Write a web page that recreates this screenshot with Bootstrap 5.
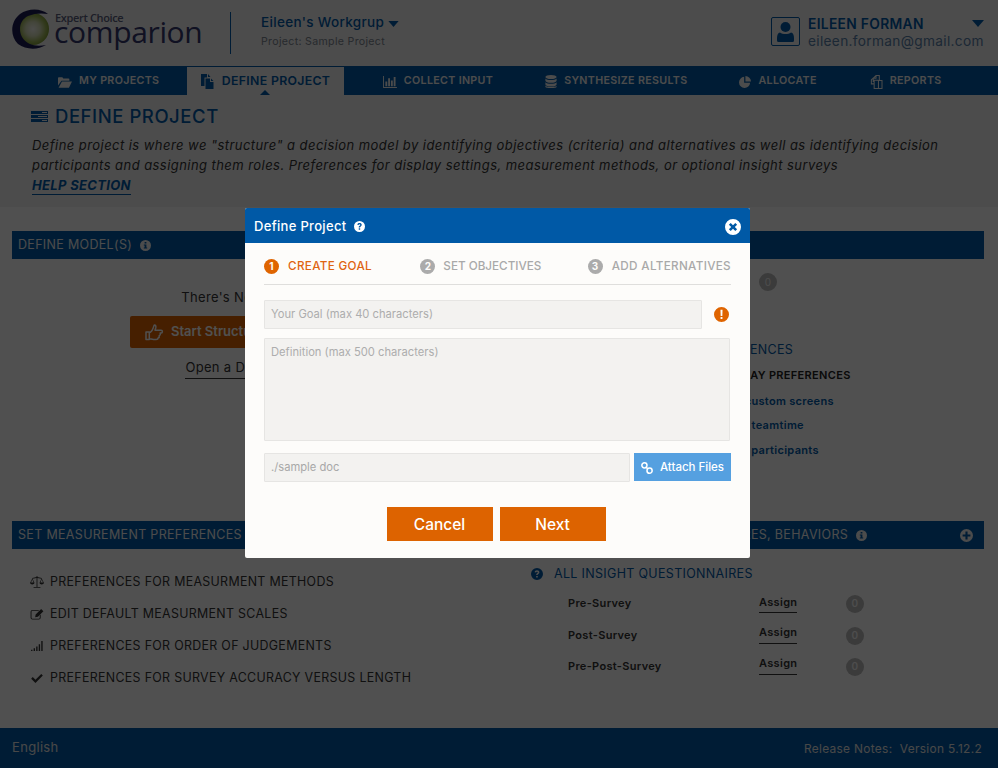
<!doctype html>
<html lang="en">
<head>
  <meta charset="utf-8">
  <meta name="viewport" content="width=device-width, initial-scale=1">
  <title>Define Project</title>
  <link href="https://cdn.jsdelivr.net/npm/bootstrap@5.3.3/dist/css/bootstrap.min.css" rel="stylesheet">
  <style>
    body {
      font-family: Inter, "Liberation Sans", sans-serif;
      background-color: #fff;
      color: #333;
      letter-spacing: .02em;
    }

    .ico { fill: currentColor; flex: none; }

    .top-area { background-color: #f2f2f2; }

    .app-header { height: 66px; padding: 0 14px 3px 12px; }
    .logo-wrap { width: 218px; height: 63px; }
    .logo-mark { margin-top: 9px; }
    .logo-type { margin: 13px 0 0 3px; }
    .logo-small { font: 600 11px/10px "Open Sans", sans-serif; color: #5b5f7d; letter-spacing: -.35px; }
    .logo-big { font: 30px/18px "Open Sans", sans-serif; color: #33366e; letter-spacing: -.35px; margin-left: -1px; }
    .head-divider { width: 1px; height: 42px; background: #005aa8; margin-right: 30px; margin-top: 3px; }
    .group-name { font-size: 13.5px; font-weight: 500; color: #005aa8; line-height: 18px; }
    .group-project { font-size: 10.6px; color: #7d8590; line-height: 18px; margin-top: 2px; }
    .avatar-box { width: 29px; height: 29px; border: 1px solid #005aa8; border-radius: 2px; color: #005aa8; }
    .user-name { font-size: 13.8px; font-weight: 600; color: #005aa8; line-height: 18px; }
    .user-mail { font-size: 13.7px; color: #5a7fa8; line-height: 16px; }

    .main-nav { height: 29px; background: #005aa8; padding-left: 58px; }
    .nav-entry { font-size: 10.7px; font-weight: 600; color: #f2f2f2; gap: 7px; white-space: nowrap; padding-top: 2px; }
    .nav-entry.is-active { background: #f2f2f2; color: #005aa8; font-size: 12.3px; height: 28px; margin-top: 1px; padding: 1px 13.5px 0; gap: 8px; position: relative; }
    .nav-entry.is-active::after {
      content: "";
      position: absolute;
      left: 73px;
      bottom: 0;
      border: 5px solid transparent;
      border-top: 0;
      border-bottom-color: #005aa8;
    }

    .intro { height: 112px; padding: 11px 32px 0 31px; }
    .intro-title { font-size: 18.5px; font-weight: 500; color: #005aa8; line-height: 20px; letter-spacing: .03em; gap: 7px; }
    .intro-text { font-size: 13px; font-style: italic; line-height: 20px; color: #333; letter-spacing: .034em; margin: 9px 0 0 1px; }
    .help-link { display: block; width: max-content; font-size: 13px; font-weight: 700; font-style: italic; line-height: 18px; color: #005aa8; border-bottom: 1px solid #005aa8; text-decoration: none; margin: 1px 0 0 1px; }

    .panels { display: grid; grid-template-columns: 1fr 1fr; column-gap: 16px; padding: 0 14px 0 12px; }
    .panel-head { height: 28px; background: #005aa8; color: #f2f2f2; font-size: 12.5px; padding: 1px 11px 0 6px; gap: 8px; white-space: nowrap; overflow: hidden; }
    .panel-top { height: 290px; margin-top: 24px; }
    .start-btn { height: 32px; width: 242px; margin-top: 10px; background: #e06400; color: #fff; font-size: 13px; font-weight: 600; border-radius: 2px; gap: 7px; border: 0; padding-left: 15px; }
    .plain-link { color: #333; font-size: 13px; text-decoration: none; border-bottom: 1px solid #333; margin-top: 10px; }
    .zero-dot { width: 18px; height: 18px; background: #bcbcbc; color: #f4f4f4; font-size: 10px; }

    .pref-list { padding-top: 17px; }
    .measure-row { height: 32px; font-size: 12.4px; color: #333; gap: 6px; padding-left: 18px; }
    .measure-row .ico { width: 14px; }
    .survey-title { font-size: 12.5px; color: #005aa8; gap: 11px; padding: 16px 0 0 25px; line-height: 18px; }
    .survey-row { height: 31px; font-size: 11px; font-weight: 600; color: #333; padding-left: 62px; }
    .survey-row.is-first { height: 33px; margin-top: 4px; }
    .survey-name { width: 191px; }
    .survey-assign { width: 38px; text-align: center; border-bottom: 1px solid #333; padding-bottom: 2px; margin-right: 49px; }
    .survey-assign.is-raised { margin-bottom: 3px; }
    .pref-label { font-size: 11px; line-height: 18px; font-weight: 600; color: #005aa8; }

    .app-footer { height: 40px; background: #005aa8; color: #e4e4e4; font-size: 13px; padding: 0 16px 0 12px; margin-top: auto; }
    .release-text { font-size: 11.9px; padding-top: 1px; }

    .modal-backdrop { --bs-backdrop-opacity: .685; }
    .goal-dialog { max-width: 505px; margin: 208px 0 0 245px; }
    .goal-content { height: 350px; background: #fdfcfa; border: 0; border-radius: 2px; overflow: hidden; }
    .goal-head { height: 35px; background: #0059a6; color: #fff; font-size: 13px; font-weight: 500; padding: 2px 9px 0; border: 0; border-radius: 0; }
    .goal-body { padding: 15px 20px 0 19px; font-size: 11px; }
    .step-line { height: 27px; padding-bottom: 8px; margin-right: -1px; border-bottom: 1px solid #dfdedc; }
    .step-item { font-size: 11.7px; font-weight: 500; color: #a9a9a9; gap: 9px; white-space: nowrap; }
    .step-item.is-current { color: #df6412; }
    .step-item.is-mid { margin-left: 2px; gap: 8px; letter-spacing: 0; }
    .step-num { width: 15px; height: 15px; background: #ababab; color: #fdfcfa; font-size: 10px; font-weight: 700; }
    .is-current .step-num { background: #df6400; }
    .goal-field {
      background: #f3f2f0;
      border: 1px solid #e6e5e3;
      border-radius: 1px;
      font-size: 11.2px;
      color: #a8a8a8;
      padding: 0 6px 2px;
      height: 29px;
    }
    .goal-field::placeholder { color: #adadad; }
    .goal-field:disabled { background: #f3f2f0; }
    textarea.goal-field { height: 103px; padding: 5px 6px; resize: none; }
    .attach-btn { width: 97px; height: 28px; margin-right: -1px; background: #55a0e0; color: #fff; font-size: 11.5px; font-weight: 500; border: 0; border-radius: 0; gap: 7px; padding: 1px 0 0; white-space: nowrap; }
    .act-btn { width: 106px; height: 34px; background: #dd6300; color: #fff; font-size: 15.5px; font-weight: 500; border: 0; border-radius: 0; padding: 1px 0 0; }
    .act-btn:hover { background: #c85900; color: #fff; }
  </style>
</head>

<body>
  <svg width="0" height="0" class="position-absolute">
    <defs>
      <radialGradient id="logo-core">
        <stop offset="0" stop-color="#f4f4ee"/>
        <stop offset=".45" stop-color="#d5dcb8"/>
        <stop offset=".8" stop-color="#9fb65a"/>
        <stop offset="1" stop-color="#84a03a"/>
      </radialGradient>
    </defs>
    <symbol id="i-question" viewBox="0 0 16 16"><path fill-rule="evenodd" d="M8 0a8 8 0 1 1 0 16A8 8 0 0 1 8 0zM8 3C6.100 3 5 4 4.800 5.600l2 .3C7 5.200 7.300 4.900 8 4.900s1.100.3 1.100.8c0 .5-.4.8-1 1.200-.8.5-1.200 1.100-1.200 2v.5h2v-.3c0-.5.3-.8.9-1.200.9-.6 1.400-1.300 1.400-2.300C11.200 4 9.900 3 8 3zM6.900 10.600v2.100h2.100v-2.100z"/></symbol>
    <symbol id="i-info" viewBox="0 0 16 16"><path fill-rule="evenodd" d="M8 0a8 8 0 1 1 0 16A8 8 0 0 1 8 0zM6.700 2.800v2.300h2.600V2.800zM5.500 6.500v1.500h1.200v3H5.500v1.500h5V11H9.300V6.500z"/></symbol>
    <symbol id="i-plus" viewBox="0 0 16 16"><path fill-rule="evenodd" d="M8 0a8 8 0 1 1 0 16A8 8 0 0 1 8 0zM6.700 3.200v3.500H3.200v2.600h3.500v3.500h2.600V9.300h3.500V6.700H9.300V3.200z"/></symbol>
    <symbol id="i-close" viewBox="0 0 16 16"><path fill-rule="evenodd" d="M8 0a8 8 0 1 1 0 16A8 8 0 0 1 8 0zM5.700 3.900 3.900 5.700 6.200 8l-2.300 2.300 1.800 1.800L8 9.800l2.300 2.300 1.800-1.800L9.800 8l2.300-2.300-1.800-1.800L8 6.200z"/></symbol>
    <symbol id="i-alert" viewBox="0 0 16 16"><path fill-rule="evenodd" d="M8 0a8 8 0 1 1 0 16A8 8 0 0 1 8 0zM6.900 3l.2 6.500h1.800L9.100 3zM7 10.600v2.100h2v-2.100z"/></symbol>
    <symbol id="i-caret" viewBox="0 0 12 7"><path d="M0 0h12L6 7z"/></symbol>
    <symbol id="i-folder" viewBox="0 0 16 13"><path d="M0 2a1 1 0 0 1 1-1h4l1 1.500h6a1 1 0 0 1 1 1V5H4L0 10.500zM4.500 6H16l-3.500 7H.7z"/></symbol>
    <symbol id="i-files" viewBox="0 0 13 15"><path fill-rule="evenodd" d="M0 0h6v3.500H3.500V12H0zM7 0l2.500 3H7zM4.500 4.500H9V8h3.500v7h-8zM10 4.500 12.500 7H10z"/></symbol>
    <symbol id="i-bars" viewBox="0 0 15 13"><path d="M0 0h1v12h14v1H0zM2.500 6h2v5h-2zM5.500 2.500h2V11h-2zM8.500 5h2v6h-2zM11.500 1h2v10h-2z"/></symbol>
    <symbol id="i-db" viewBox="0 0 12 15"><ellipse cx="6" cy="2.200" rx="6" ry="2.200"/><path d="M0 3.700c1 1.200 3 1.700 6 1.700s5-.5 6-1.700v2.500c0 1.200-2.700 2.200-6 2.200S0 7.400 0 6.200zM0 7.700C1 8.900 3 9.400 6 9.400s5-.5 6-1.700v2.500c0 1.200-2.700 2.200-6 2.200s-6-1-6-2.200zM0 11.200c1 1.200 3 1.700 6 1.700s5-.5 6-1.200v.8c0 1.200-2.700 1.500-6 1.500s-6-.3-6-1.500z"/></symbol>
    <symbol id="i-pie" viewBox="0 0 14 14"><path d="M6 1v7h7A6.500 6.500 0 1 1 6 1zM7.500 0A6.500 6.500 0 0 1 14 6.500H7.500z"/></symbol>
    <symbol id="i-copies" viewBox="0 0 13 15"><path fill="none" stroke="currentColor" stroke-width="1.100" d="M3 7.500V3.500L6 .6h3.500v5M6 .6v3H3M4 5.600h4l.6.6V14.400H4zM8.600 6h3.800v8.400H8.600M4.400 9.500 1 9.500V5l2-1.500"/></symbol>
    <symbol id="i-list" viewBox="0 0 17 11"><path fill-rule="evenodd" d="M0 0h17v3H0zM11 1v1h5V1zM0 4h17v3H0zM7 5v1h9V5zM0 8h17v3H0zM11 9v1h5V9z"/></symbol>
    <symbol id="i-user" viewBox="0 0 17 20"><circle cx="8.500" cy="5" r="5"/><path d="M3 10.500c1.300 1 3.500 1.500 5.500 1.500s4.200-.5 5.500-1.500c2 .4 3 2.500 3 5.500v2.500a1.500 1.500 0 0 1-1.500 1.500h-14A1.500 1.500 0 0 1 0 18.500V16c0-3 1-5.100 3-5.500z"/></symbol>
    <symbol id="i-link" viewBox="0 0 14 14"><path fill="none" stroke="currentColor" stroke-width="1.800" d="M4 .9a3 3 0 0 1 0 6 3 3 0 0 1 0-6zM10 7.100a3 3 0 0 1 0 6 3 3 0 0 1 0-6zM5.800 5.800l2.400 2.400"/></symbol>
    <symbol id="i-thumb" viewBox="0 0 20 18"><path fill="none" stroke="currentColor" stroke-width="1.600" stroke-linejoin="round" d="M1 8.500h3.500V16.500H1zM4.500 9c2 0 3-2 4-4.500.6-1.500.8-3 1.300-3.500 1.500 0 2 1.500 1.500 3.300l-.8 2.200h6.500c1.800 0 1.800 3 0 3h-1c.6 1.600-.2 2.500-1 2.800.3 1.300-.3 2.200-1.200 2.500 0 1.300-.8 1.500-2 1.500H9c-2 0-3-.8-4.500-.8"/></symbol>
    <symbol id="i-scale" viewBox="0 0 16 14"><path d="M7.500 0h1v1.200l5 1V3l2.500 5c0 1.400-1.200 2-2.500 2S11 9.400 11 8l2.200-4.700L8.500 2.400V12.800H12v1H4v-1h3.500V2.400L2.800 3.300 5 8c0 1.400-1.200 2-2.500 2S0 9.400 0 8l2.500-5v-.8l5-1zM2.500 4 1 7.700h3zM13.500 4 12 7.700h3z"/></symbol>
    <symbol id="i-edit" viewBox="0 0 14 12"><path d="M2 1h7.500L8.500 2H2a1 1 0 0 0-1 1v6.500a1 1 0 0 0 1 1h7a1 1 0 0 0 1-1V7l1-1v3.500A2 2 0 0 1 9 11.500H2a2 2 0 0 1-2-2V3a2 2 0 0 1 2-2zM11.500 0 14 2.500 8 8.500 5 9l.5-3z"/></symbol>
    <symbol id="i-signal" viewBox="0 0 13 11"><path d="M0 9.500h1.500V11H0zM2.800 8h1.500v3H2.800zM5.600 6h1.500v5H5.600zM8.400 3.500h1.500V11H8.400zM11.200 0h1.500v11h-1.500z"/></symbol>
    <symbol id="i-check" viewBox="0 0 13 10"><path d="M4.800 10 0 5.200l1.800-1.800 3 3L11.200 0 13 1.800z"/></symbol>
  </svg>

  <div class="d-flex flex-column min-vh-100">
    <div class="top-area">
      <header class="app-header d-flex align-items-center">
        <div class="logo-wrap d-flex align-items-start">
          <svg class="logo-mark flex-shrink-0" width="40" height="42" viewBox="0 0 40 42">
            <circle cx="21" cy="20" r="16" fill="url(#logo-core)"/>
            <path d="M36 5C29-1 16-1 8 5-2 13-2 27 6 35c8 6 20 6 28 1-10 2-19 0-24-8C6 20 8 11 16 7c7-3 14-3 20-2z" fill="#1b1b55"/>
          </svg>
          <div class="logo-type">
            <div class="logo-small">Expert Choice</div>
            <div class="logo-big">comparion</div>
          </div>
        </div>
        <div class="head-divider"></div>
        <div>
          <div class="group-name">Eileen's Workgrup <svg class="ico align-baseline" width="11" height="6"><use href="#i-caret"/></svg></div>
          <div class="group-project">Project: Sample Project</div>
        </div>
        <div class="ms-auto d-flex align-items-center gap-2">
          <div class="avatar-box d-flex align-items-center justify-content-center">
            <svg class="ico" width="17" height="20"><use href="#i-user"/></svg>
          </div>
          <div style="width:176px">
            <div class="user-name d-flex justify-content-between align-items-center">EILEEN FORMAN <svg class="ico" width="12" height="7"><use href="#i-caret"/></svg></div>
            <div class="user-mail">eileen.forman@gmail.com</div>
          </div>
        </div>
      </header>

      <nav class="main-nav d-flex">
        <a class="nav-entry d-flex align-items-center text-decoration-none" style="margin-right:28px"><svg class="ico" width="14" height="12"><use href="#i-folder"/></svg>MY PROJECTS</a>
        <a class="nav-entry is-active d-flex align-items-center text-decoration-none" style="margin-right:39px"><svg class="ico" width="13" height="15"><use href="#i-files"/></svg>DEFINE PROJECT</a>
        <a class="nav-entry d-flex align-items-center text-decoration-none" style="margin-right:52px"><svg class="ico" width="14" height="12"><use href="#i-bars"/></svg>COLLECT INPUT</a>
        <a class="nav-entry d-flex align-items-center text-decoration-none" style="margin-right:52px"><svg class="ico" width="12" height="14"><use href="#i-db"/></svg>SYNTHESIZE RESULTS</a>
        <a class="nav-entry d-flex align-items-center text-decoration-none" style="margin-right:53px"><svg class="ico" width="12" height="12"><use href="#i-pie"/></svg>ALLOCATE</a>
        <a class="nav-entry d-flex align-items-center text-decoration-none"><svg class="ico" width="13" height="14"><use href="#i-copies"/></svg>REPORTS</a>
      </nav>

      <section class="intro">
        <div class="intro-title d-flex align-items-center">
          <svg class="ico" width="17" height="11"><use href="#i-list"/></svg>
          DEFINE PROJECT
        </div>
        <p class="intro-text">Define project is where we "structure" a decision model by identifying objectives (criteria) and alternatives as well as identifying decision participants and assigning them roles. Preferences for display settings, measurement methods, or optional insight surveys</p>
        <a class="help-link" href="#">HELP SECTION</a>
      </section>
    </div>

    <main class="panels">
      <div class="panel-top">
        <div class="panel-head d-flex align-items-center">DEFINE MODEL(S) <svg class="ico" width="11" height="11"><use href="#i-info"/></svg></div>
        <div class="d-flex flex-column align-items-center" style="padding-top:29px">
          <div style="font-size:13px;line-height:18px">There's No Model Yet</div>
          <button class="start-btn d-flex align-items-center" type="button"><svg class="ico" width="19" height="17"><use href="#i-thumb"/></svg>Start Structuring Now</button>
          <a class="plain-link" href="#">Open a Demo Model</a>
        </div>
      </div>
      <div class="panel-top">
        <div class="panel-head d-flex align-items-center">DEFINE PARTICIPANTS</div>
        <div class="d-flex justify-content-end" style="padding:14px 207px 0 0"><span class="zero-dot rounded-circle d-flex align-items-center justify-content-center">0</span></div>
        <div style="padding:50px 0 0 168px;font-size:12.5px;line-height:18px;color:#005aa8">ALL PREFERENCES</div>
        <div class="pref-label" style="padding:7px 0 0 186px;color:#222">SET DISPLAY PREFERENCES</div>
        <div class="pref-label" style="padding:8px 0 0 214px">Edit custom screens</div>
        <div class="pref-label" style="padding:6px 0 0 224px">Set teamtime</div>
        <div class="pref-label" style="padding:7px 0 0 211px">Invite participants</div>
      </div>

      <div>
        <div class="panel-head d-flex align-items-center">SET MEASUREMENT PREFERENCES</div>
        <div class="pref-list">
          <div class="measure-row d-flex align-items-center"><svg class="ico" width="14" height="12"><use href="#i-scale"/></svg>PREFERENCES FOR MEASURMENT METHODS</div>
          <div class="measure-row d-flex align-items-center"><svg class="ico" width="13" height="11"><use href="#i-edit"/></svg>EDIT DEFAULT MEASURMENT SCALES</div>
          <div class="measure-row d-flex align-items-center"><svg class="ico" width="13" height="10"><use href="#i-signal"/></svg>PREFERENCES FOR ORDER OF JUDGEMENTS</div>
          <div class="measure-row d-flex align-items-center"><svg class="ico" width="12" height="9"><use href="#i-check"/></svg>PREFERENCES FOR SURVEY ACCURACY VERSUS LENGTH</div>
        </div>
      </div>
      <div>
        <div class="panel-head d-flex align-items-center">
          <span>SET INSIGHT SURVEY QUESTIONNAIRES, BEHAVIORS</span>
          <svg class="ico me-auto" width="11" height="11"><use href="#i-info"/></svg>
          <svg class="ico" width="13" height="13"><use href="#i-plus"/></svg>
        </div>
        <div class="survey-title d-flex align-items-center"><svg class="ico" width="12" height="12"><use href="#i-question"/></svg>ALL INSIGHT QUESTIONNAIRES</div>
        <div class="survey-row is-first d-flex align-items-center"><span class="survey-name">Pre-Survey</span><span class="survey-assign">Assign</span><span class="zero-dot rounded-circle d-flex align-items-center justify-content-center">0</span></div>
        <div class="survey-row d-flex align-items-center"><span class="survey-name">Post-Survey</span><span class="survey-assign is-raised">Assign</span><span class="zero-dot rounded-circle d-flex align-items-center justify-content-center">0</span></div>
        <div class="survey-row d-flex align-items-center"><span class="survey-name">Pre-Post-Survey</span><span class="survey-assign is-raised">Assign</span><span class="zero-dot rounded-circle d-flex align-items-center justify-content-center">0</span></div>
      </div>
    </main>

    <footer class="app-footer d-flex align-items-center justify-content-between">
      <span>English</span>
      <span class="release-text">Release Notes:&nbsp; Version 5.12.2</span>
    </footer>
  </div>

  <div class="modal-backdrop show"></div>
  <div class="modal d-block" tabindex="-1">
    <div class="modal-dialog goal-dialog">
      <div class="modal-content goal-content">
        <div class="modal-header goal-head d-flex align-items-center">
          <span>Define Project</span>
          <svg class="ico ms-2" width="11" height="11"><use href="#i-question"/></svg>
          <svg class="ico ms-auto" width="16" height="16"><use href="#i-close"/></svg>
        </div>
        <div class="modal-body goal-body">
          <div class="step-line d-flex justify-content-between align-items-center">
            <div class="step-item is-current d-flex align-items-center"><span class="step-num rounded-circle d-flex align-items-center justify-content-center">1</span>CREATE GOAL</div>
            <div class="step-item is-mid d-flex align-items-center"><span class="step-num rounded-circle d-flex align-items-center justify-content-center">2</span>SET OBJECTIVES</div>
            <div class="step-item d-flex align-items-center"><span class="step-num rounded-circle d-flex align-items-center justify-content-center">3</span>ADD ALTERNATIVES</div>
          </div>
          <div class="d-flex align-items-center" style="gap:12px;margin-top:15px">
            <input class="goal-field form-control shadow-none" type="text" placeholder="Your Goal (max 40 characters)">
            <svg class="ico" width="15" height="15" style="color:#df6400;margin-right:1px"><use href="#i-alert"/></svg>
          </div>
          <textarea class="goal-field form-control shadow-none" style="margin-top:9px" placeholder="Definition (max 500 characters)"></textarea>
          <div class="d-flex align-items-start gap-1 mt-2 pt-1">
            <input class="goal-field form-control shadow-none" type="text" value="./sample doc" disabled>
            <button class="attach-btn btn d-flex align-items-center justify-content-center flex-shrink-0" type="button"><svg class="ico" width="12" height="12"><use href="#i-link"/></svg>Attach Files</button>
          </div>
          <div class="d-flex justify-content-center" style="gap:7px;margin-top:25px;padding-right:2px">
            <button class="act-btn btn" type="button">Cancel</button>
            <button class="act-btn btn" type="button">Next</button>
          </div>
        </div>
      </div>
    </div>
  </div>

  <script src="https://cdn.jsdelivr.net/npm/bootstrap@5.3.3/dist/js/bootstrap.bundle.min.js"></script>
</body>
</html>
